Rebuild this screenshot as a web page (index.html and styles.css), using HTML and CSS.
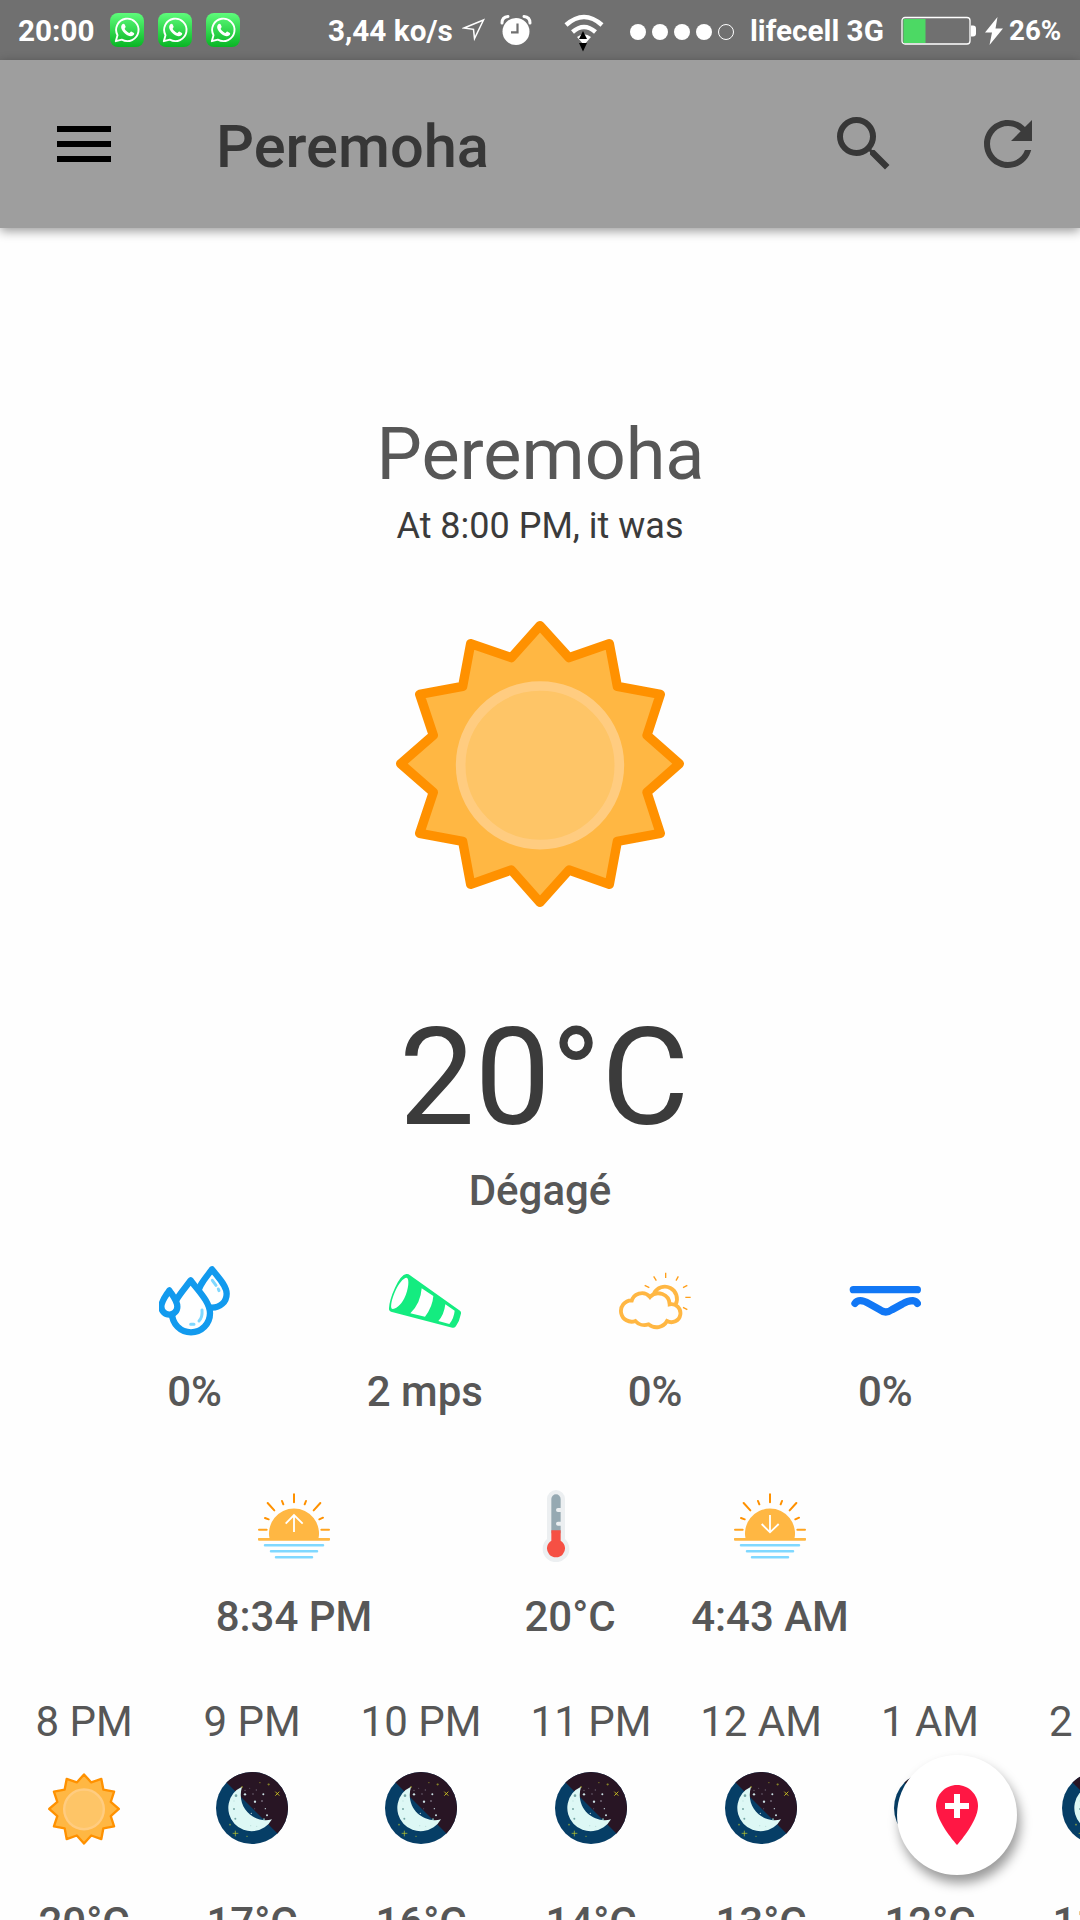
FILE: index.html
```html
<!DOCTYPE html>
<html lang="en">
<head>
<meta charset="utf-8">
<title>Peremoha</title>
<link rel="stylesheet" href="styles.css">
</head>
<body>
<svg class="defs" width="0" height="0">
  <defs>
    <linearGradient id="wa-green" x1="0" y1="0" x2="0" y2="1">
      <stop offset="0" stop-color="#5efc7b"/><stop offset="1" stop-color="#08b524"/>
    </linearGradient>
    <symbol id="whatsapp" viewBox="0 0 34 34">
      <rect width="34" height="34" rx="8" fill="url(#wa-green)"/>
      <path d="M5.8 28.2l1.7-6A11.2 11.2 0 1 1 11.8 26.600z" fill="none" stroke="#fff" stroke-width="1.900" stroke-linejoin="round"/>
      <path d="M12.300 11.300c1-1 2-.8 2.400.2l.9 2.100c.3.8-.9 1.600-.9 2.100 0 .8 3.200 4.100 4.600 4.200.7 0 1.300-1.600 2-1.300l2.600 1.300c.8.400 0 2.100-.9 2.700-2.200 1.400-5.400.2-7.800-1.900-2.600-2.300-5.800-6.300-2.900-9.400z" fill="#fff"/>
    </symbol>
    <symbol id="sun" viewBox="0 0 960 960">
      <path d="M480 77L567 173L688 131L712 259L841 283L801 406L898 491L801 577L841 700L712 724L688 853L567 810L480 907L394 810L272 853L248 724L119 700L160 577L62 491L160 406L119 283L248 259L272 131L394 173Z" fill="#ffb743" stroke="#ff9100" stroke-width="28" stroke-linejoin="round"/>
      <circle cx="480" cy="496" r="238" fill="#fec567" stroke="#ffcc80" stroke-width="29"/>
    </symbol>
    <symbol id="moon" viewBox="48 66 216 216">
      <circle cx="156" cy="174" r="108" fill="#063e66"/>
      <path d="M79.600 97.600A108 108 0 0 1 232.400 250.400Z" fill="#281524"/>
      <path d="M126 110A70 70 0 1 0 216 208C165 222 107 176 126 110Z" fill="#ddf8f5"/>
      <g fill="#76a6a5"><circle cx="108" cy="137" r="4"/><circle cx="102" cy="177" r="3"/><circle cx="106" cy="206" r="3"/><circle cx="192" cy="208" r="3"/></g>
      <g fill="#c9dfe3"><circle cx="135" cy="133" r="3.500"/><circle cx="190" cy="133" r="3"/><circle cx="165" cy="155" r="3.500"/><circle cx="196" cy="176" r="2"/><circle cx="201" cy="196" r="3"/><circle cx="154" cy="190" r="2"/></g>
      <g fill="#6f6573"><circle cx="186" cy="153" r="3"/><circle cx="159" cy="132" r="2.500"/><circle cx="149" cy="115" r="1.500"/><circle cx="169" cy="120" r="2"/><circle cx="164" cy="176" r="1.500"/><circle cx="135" cy="121" r="2"/></g>
      <g fill="#bfe3de"><circle cx="102" cy="153" r="2"/><circle cx="152" cy="227" r="2"/><circle cx="170" cy="229" r="2"/></g>
      <g stroke="#c8cf2a" stroke-width="2" fill="none"><path d="M106 242v17M98 250h17"/><path d="M226 125l12 12M238 125l-12 12" stroke="#d8d020" stroke-width="2.500"/><path d="M206 100v7M202 103h8M177 98h5M138 259h6M87 224h6M90 221v6M124 111h5M126 108v6" opacity=".65"/></g>
    </symbol>
    <symbol id="horizon" viewBox="174 60 216 216">
      <path d="M209 208A75 75 0 1 1 355 208Z" fill="#ffb743"/>
      <g stroke="#ff9100" stroke-width="6" stroke-linecap="round"><path d="M282 73V97M203 99L223 121M361 99L341 121M246 93L250 103M318 93L314 103M195 144L206 148M369 143L358 148"/><path d="M177 179H200M364 179H387" stroke="#ffa31e"/></g>
      <path d="M177 208H387" stroke="#ffb743" stroke-width="8" stroke-linecap="round"/>
      <path d="M195 226H369M213 244H351M228 262H336" stroke="#80d8ff" stroke-width="7.500" stroke-linecap="round"/>
    </symbol>
  </defs>
</svg>

<div class="screen">
  <header class="status">
    <span class="clock">20:00</span>
    <span class="apps">
      <svg width="34" height="34"><use href="#whatsapp"/></svg>
      <svg width="34" height="34"><use href="#whatsapp"/></svg>
      <svg width="34" height="34"><use href="#whatsapp"/></svg>
    </span>
    <span class="rate">3,44 ko/s</span>
    <svg class="nav-arrow" width="24" height="24" viewBox="0 0 24 24"><path d="M2 10L21.500 2L12.500 20.500L11.500 11.300Z" fill="none" stroke="#fff" stroke-width="1.500"/></svg>
    <svg class="alarm" width="32" height="32" viewBox="0 0 32 32"><circle cx="16" cy="17.500" r="13.500" fill="#fff"/><path d="M2 9Q2 3 8 2.500M30 9Q30 3 24 2.500" fill="none" stroke="#fff" stroke-width="3" stroke-linecap="round"/><path d="M17.500 9.500V18.300H11" fill="none" stroke="#707070" stroke-width="2.200"/></svg>
    <svg class="wifi" width="40" height="40" viewBox="0 0 40 40"><g fill="none" stroke="#fff"><path d="M2 12Q20-4 38 12" stroke-width="4.500"/><path d="M8.500 19Q20 9 31.500 19" stroke-width="4.500"/></g><path d="M13 24Q20 18.500 27 24L20 32Z" fill="#fff"/><path d="M19 18l4 8h-8zM19 38.500l4-8.500h-8z"/></svg>
    <span class="signal"><i></i><i></i><i></i><i></i><i class="off"></i></span>
    <span class="carrier">lifecell 3G</span>
    <svg class="battery" width="75" height="30" viewBox="0 0 75 30"><rect x="1" y="1.500" width="68" height="26.500" rx="3" fill="none" stroke="#fff" stroke-width="1.300"/><rect x="2.500" y="3" width="22" height="24" fill="#4cd964"/><path d="M70 9.500h2q3 0 3 3v5q0 3-3 3h-2z" fill="#fff"/></svg>
    <svg class="bolt" width="18" height="28" viewBox="0 0 18 28"><path d="M12.500 0L0 15.500H7L4.500 28L18 11.500H10.500Z" fill="#fff"/></svg>
    <span class="percent">26%</span>
  </header>

  <nav class="appbar">
    <svg class="menu" width="72" height="72" viewBox="0 0 24 24"><path d="M3 18h18v-2H3v2zm0-5h18v-2H3v2zm0-7v2h18V6H3z"/></svg>
    <h1 class="title">Peremoha</h1>
    <svg class="action" width="72" height="72" viewBox="0 0 24 24"><path d="M15.500 14h-.79l-.28-.27A6.471 6.471 0 0 0 16 9.500 6.500 6.500 0 1 0 9.500 16c1.610 0 3.090-.59 4.230-1.570l.27.28v.79l5 4.990L20.490 19l-4.990-5zm-6 0C7.010 14 5 11.990 5 9.500S7.010 5 9.500 5 14 7.010 14 9.500 11.990 14 9.500 14z"/></svg>
    <svg class="action refresh" width="72" height="72" viewBox="0 0 24 24"><path d="M17.650 6.350C16.200 4.900 14.210 4 12 4c-4.420 0-7.990 3.580-7.990 8s3.570 8 7.990 8c3.730 0 6.840-2.550 7.730-6h-2.080c-.82 2.330-3.040 4-5.650 4-3.310 0-6-2.690-6-6s2.690-6 6-6c1.660 0 3.140.69 4.220 1.780L13 11h7V4l-2.350 2.350z"/></svg>
  </nav>

  <main class="content">
    <h2 class="city">Peremoha</h2>
    <p class="time">At 8:00 PM, it was</p>
    <svg class="hero" width="320" height="320"><use href="#sun"/></svg>
    <p class="temp">20°C</p>
    <p class="label">Dégagé</p>

    <section class="metrics">
      <div class="metric">
        <svg width="72" height="72" viewBox="87 75 216 216">
          <g fill="#fff" stroke="#129aee" stroke-width="19" stroke-linejoin="round">
            <path d="M246 88C232 108 202 138 203 166C204 190 224 203 246 203C270 203 290 186 290 161C290 136 262 109 246 88Z"/>
            <path d="M182 121C166 145 126 184 126 220A57 57 0 0 0 240 220C240 184 200 147 182 121Z"/>
            <path d="M118 151C108 167 94 182 94 200A24 24 0 0 0 142 200C142 182 128 167 118 151Z"/>
          </g>
          <path d="M247 121L258 136M265 147L267 152M216 210Q218 232 207 243M192 253H182" fill="none" stroke="#80d8ff" stroke-width="9" stroke-linecap="round"/>
        </svg>
        <span class="label">0%</span>
      </div>
      <div class="metric">
        <svg width="72" height="72" viewBox="777 75 216 216">
          <path d="M829 102Q835 101 840 106L990 212Q995 217 992 224Q989 242 978 258Q975 265 967 263L783 215Q776 212 777 205Q778 180 795 143Q813 104 829 102Z" fill="#14ec80"/>
          <path d="M830 113C839 115 836 148 823 175C809 204 786 212 784 204C780 180 808 115 830 113ZM875 145L910 168Q908 200 885 230L841 220Q872 190 875 145ZM946 193L974 212Q972 235 958 252L925 243Q942 225 946 193Z" fill="#fff"/>
        </svg>
        <span class="label">2 mps</span>
      </div>
      <div class="metric">
        <svg width="72" height="72" viewBox="118 75 216 216">
          <g fill="none" stroke="#ffb743" stroke-width="11.500">
            <path d="M155 181A32 32 0 1 0 167 243A36 36 0 0 0 207 253A36 36 0 0 0 262 243A27 27 0 1 0 270 193A34 34 0 0 0 211 171A32 32 0 0 0 155 187"/>
            <path d="M223 160A36 36 0 1 1 288 193"/>
          </g>
          <path d="M258 98V114M296 109L289 122M323 136L310 143M317 172H333M310 202L323 209M222 109L230 122M195 136L209 143" stroke="#ff9f1a" stroke-width="4"/>
        </svg>
        <span class="label">0%</span>
      </div>
      <div class="metric">
        <svg width="72" height="72" viewBox="808 75 216 216"><g fill="none" stroke="#1177f5" stroke-width="22" stroke-linecap="round"><path d="M821 149H1013"/><path d="M826 190Q832 182 842 182Q853 182 868 191L900 209Q918 223 937 209L968 192Q984 182 999 182Q1008 183 1013 190"/></g></svg>
        <span class="label">0%</span>
      </div>
    </section>

    <section class="sunrow">
      <div class="metric rise">
        <svg width="72" height="72" viewBox="174 60 216 216"><use href="#horizon" x="174" y="60" width="216" height="216"/><path d="M282 186V136M257 161L282 135L308 161" fill="none" stroke="#fff" stroke-width="5.500"/></svg>
        <span class="label">8:34 PM</span>
      </div>
      <div class="metric thermo">
        <svg width="72" height="72" viewBox="960 60 216 216">
          <path d="M1041 87A27 27 0 0 1 1095 87V207A40 40 0 1 1 1041 207Z" fill="#eceff1"/>
          <path d="M1054 87A14 14 0 0 1 1082 87V190H1054Z" fill="#96a9b2"/>
          <path d="M1083 120H1074M1083 161H1074" stroke="#eceff1" stroke-width="12" stroke-linecap="round"/>
          <path d="M1054 181H1082V212A27 27 0 1 1 1054 212Z" fill="#f65044"/>
        </svg>
        <span class="label">20°C</span>
      </div>
      <div class="metric set">
        <svg width="72" height="72" viewBox="174 60 216 216"><use href="#horizon" x="174" y="60" width="216" height="216"/><path d="M282 135V186M257 162L282 187L308 162" fill="none" stroke="#fff" stroke-width="5.500"/></svg>
        <span class="label">4:43 AM</span>
      </div>
    </section>

    <section class="hours">
      <div class="hour"><span class="at">8 PM</span><svg width="80" height="80"><use href="#sun"/></svg><span class="label">20°C</span></div>
      <div class="hour"><span class="at">9 PM</span><svg width="72" height="72"><use href="#moon"/></svg><span class="label">17°C</span></div>
      <div class="hour wide"><span class="at">10 PM</span><svg width="72" height="72"><use href="#moon"/></svg><span class="label">16°C</span></div>
      <div class="hour wide"><span class="at">11 PM</span><svg width="72" height="72"><use href="#moon"/></svg><span class="label">14°C</span></div>
      <div class="hour wide"><span class="at">12 AM</span><svg width="72" height="72"><use href="#moon"/></svg><span class="label">13°C</span></div>
      <div class="hour"><span class="at">1 AM</span><svg width="72" height="72"><use href="#moon"/></svg><span class="label">12°C</span></div>
      <div class="hour"><span class="at">2 AM</span><svg width="72" height="72"><use href="#moon"/></svg><span class="label">11°C</span></div>
    </section>
  </main>

  <button class="fab" aria-label="Add location">
    <svg width="72" height="72" viewBox="0 0 24 24"><path d="M12 2C8.130 2 5 5.130 5 9c0 5.250 7 13 7 13s7-7.750 7-13c0-3.870-3.130-7-7-7z" fill="#ff1744"/><path d="M12 5v8M8 9h8" stroke="#fff" stroke-width="2"/></svg>
  </button>
</div>
</body>
</html>
```

FILE: styles.css
```css
* { box-sizing: border-box; margin: 0; padding: 0; }
body { font-family: Roboto, sans-serif; background: #fefefe; color: #575757; overflow: hidden; }
svg { display: block; flex: none; }
.defs { position: absolute; }
.screen { position: relative; width: 1080px; height: 1920px; overflow: hidden; display: flex; flex-direction: column; }

.status { height: 60px; flex: none; background: #707070; color: #fff; display: flex; align-items: center; padding-left: 18px; font-size: 29.700px; font-weight: 700; line-height: 36px; white-space: nowrap; }
.status span { flex: none; }
.clock, .rate, .carrier, .percent { padding-top: 2px; }
.clock { width: 92px; }
.apps { display: flex; gap: 14px; width: 218px; }
.rate { width: 134px; }
.nav-arrow { width: 24px; margin-right: 14px; }
.alarm { margin-right: 32px; }
.wifi { margin: 6px 25px 0 0; }
.signal { display: flex; gap: 6px; width: 121px; padding: 3px 0 0 1px; }
.signal i { width: 16px; height: 16px; border-radius: 50%; background: #fff; }
.signal .off { background: none; border: 1.500px solid #fff; }
.carrier { width: 151px; }
.battery { margin: 2px 9px 0 0; }
.bolt { margin: 2px 6px 0 0; }
.percent { font-size: 27.700px; }

.appbar { height: 168px; flex: none; background: #9e9e9e; display: flex; align-items: center; padding: 0 36px 0 48px; box-shadow: 0 3px 10px rgba(0, 0, 0, .4); z-index: 1; }
.title { flex: 1; margin-left: 96px; padding-top: 6px; font-size: 59.600px; line-height: 70px; font-weight: 500; color: #373737; }
.action { fill: #373737; }
.refresh { margin-left: 72px; fill: #3c3c3c; }

.content { padding-top: 185px; display: flex; flex-direction: column; align-items: center; }
.city { padding-left: 1px; font-size: 72px; line-height: 84px; font-weight: 400; }
.time { margin-top: 8px; font-size: 36px; line-height: 42px; color: #3b3b3b; }
.hero { margin-top: 53px; }
.temp { margin-top: 79px; padding-left: 8px; font-size: 135px; line-height: 158px; color: #3b3b3b; }
.label { font-size: 42px; line-height: 50px; font-weight: 500; white-space: nowrap; }
.content > .label { margin-top: 9px; }

.metrics { display: grid; grid-template-columns: repeat(4, 1fr); width: 921px; margin-top: 49px; }
.metric { display: flex; flex-direction: column; align-items: center; gap: 30px; }
.sunrow { display: flex; align-self: stretch; padding-left: 218px; margin-top: 73px; }
.rise { width: 152px; }
.thermo { width: 92px; margin-left: 154px; }
.thermo svg { margin-right: 28px; }
.set { width: 154px; margin-left: 77px; }

.hours { display: flex; align-self: flex-start; margin-top: 55px; }
.hour { width: 168px; flex: none; display: flex; flex-direction: column; align-items: center; }
.hour.wide { width: 170px; }
.hour svg { height: 80px; margin: 21px 0 50px; }
.at { font-size: 42px; line-height: 50px; white-space: nowrap; }

.fab { position: absolute; left: 897px; top: 1755px; width: 120px; height: 120px; border: 0; border-radius: 50%; background: #fff; display: flex; align-items: center; justify-content: center; box-shadow: 3px 8px 12px rgba(0, 0, 0, .4); z-index: 2; }
```
